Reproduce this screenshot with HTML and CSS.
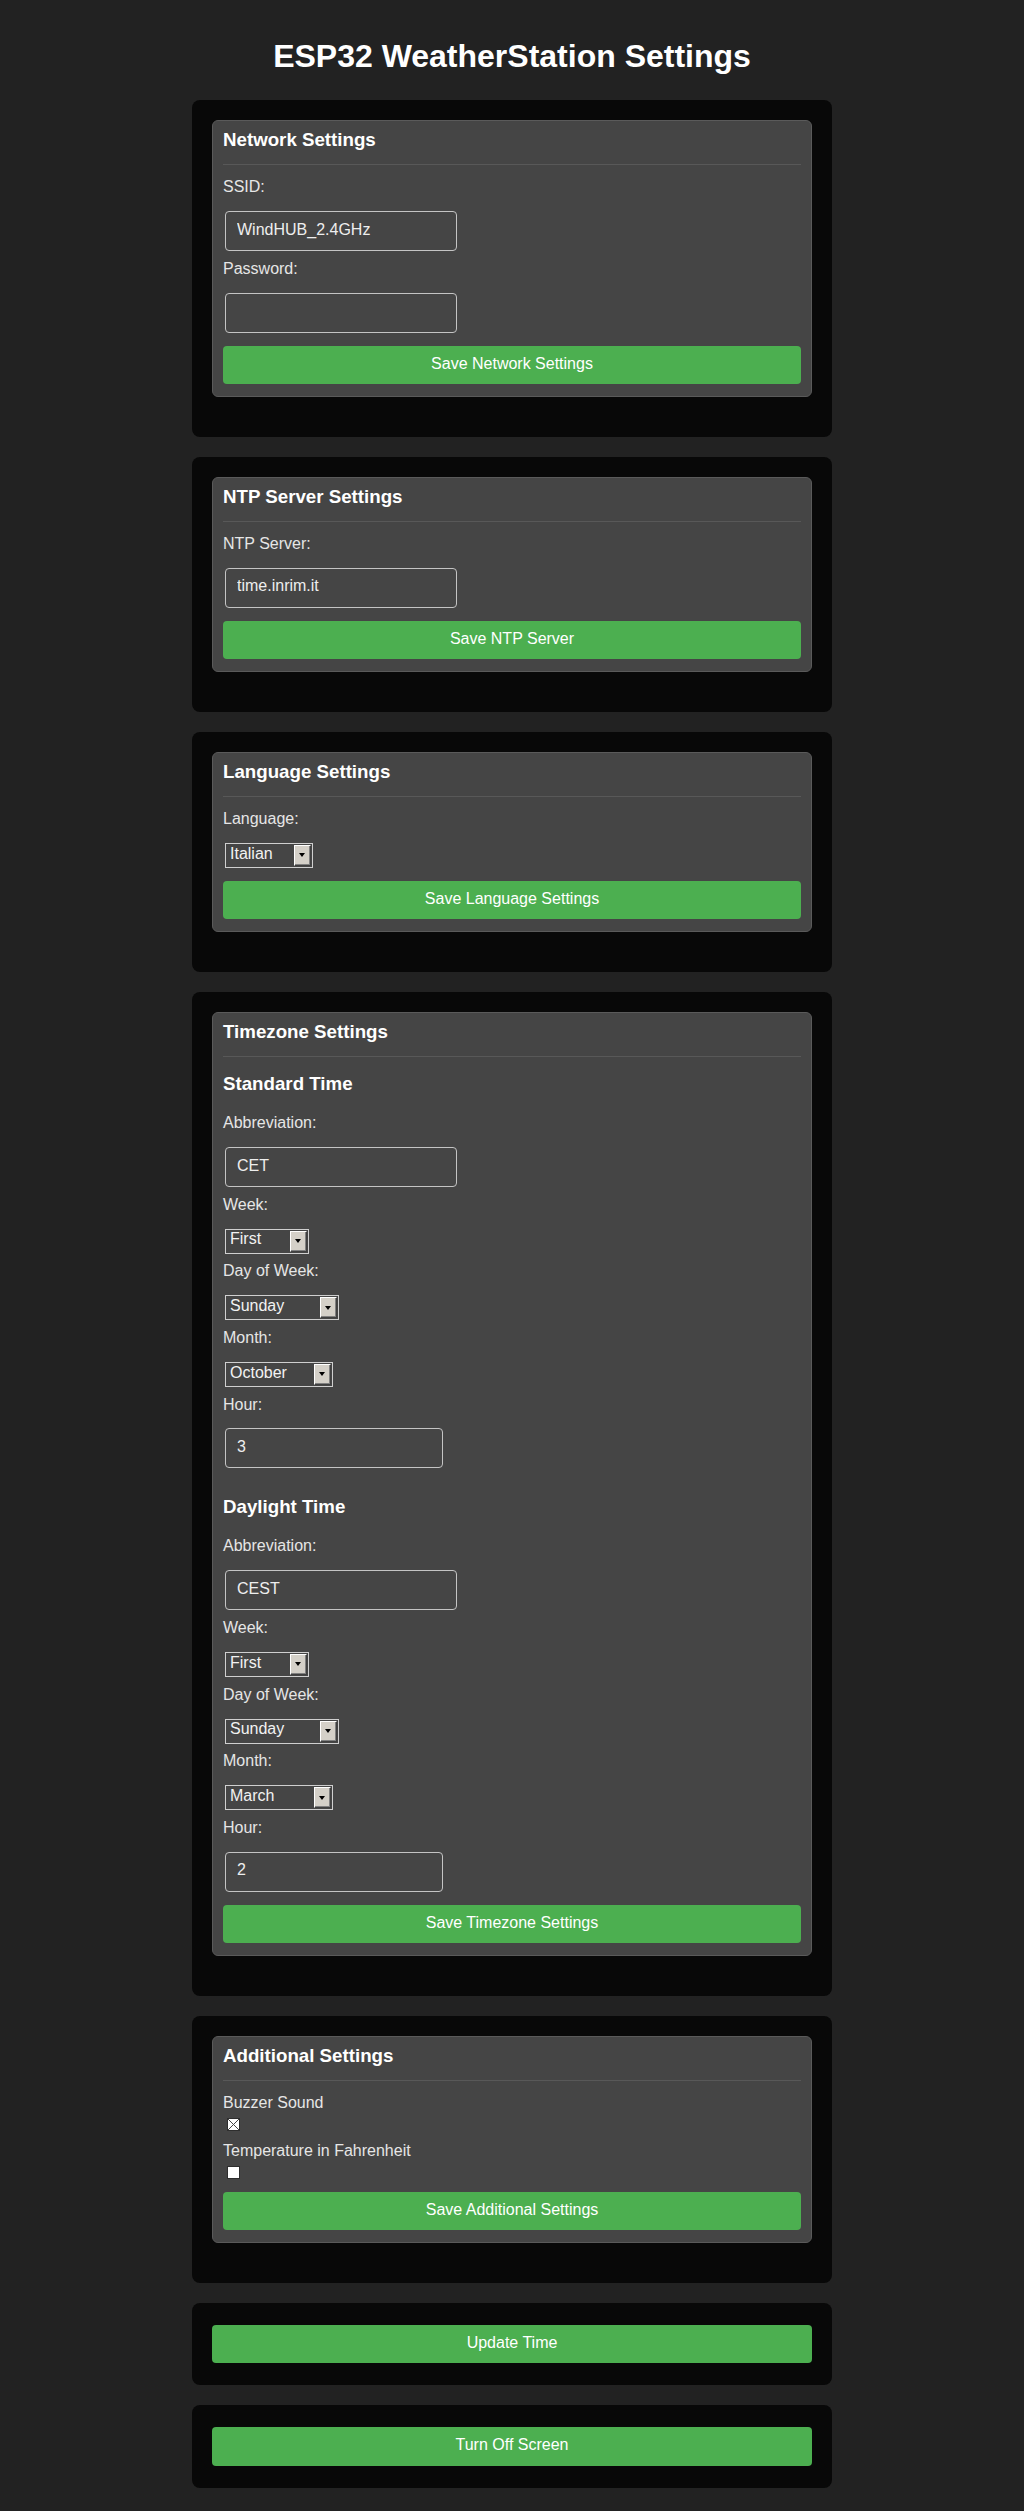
FILE: index.html
```html
<!DOCTYPE html>
<html lang="en">
<head>
<meta charset="utf-8">
<title>ESP32 WeatherStation Settings</title>
<link rel="stylesheet" href="styles.css">
</head>
<body>
<main class="page">
  <h1 class="page-title">ESP32 WeatherStation Settings</h1>

  <div class="panels">
    <section class="panel">
      <form class="card">
        <h3 class="card-title">Network Settings</h3>
        <label class="field-label" for="ssid">SSID:</label>
        <input class="text-input" type="text" id="ssid" value="WindHUB_2.4GHz">
        <label class="field-label" for="password">Password:</label>
        <input class="text-input" type="password" id="password">
        <button class="btn" type="button">Save Network Settings</button>
      </form>
    </section>

    <section class="panel">
      <form class="card">
        <h3 class="card-title">NTP Server Settings</h3>
        <label class="field-label" for="ntp">NTP Server:</label>
        <input class="text-input" type="text" id="ntp" value="time.inrim.it">
        <button class="btn" type="button">Save NTP Server</button>
      </form>
    </section>

    <section class="panel">
      <form class="card">
        <h3 class="card-title">Language Settings</h3>
        <label class="field-label" for="lang">Language:</label>
        <span class="select-wrap w-lang">
          <select class="select" id="lang">
            <option>English</option>
            <option selected>Italian</option>
            <option>Deutsch</option>
          </select>
          <span class="select-btn"></span>
        </span>
        <button class="btn" type="button">Save Language Settings</button>
      </form>
    </section>

    <section class="panel">
      <form class="card">
        <h3 class="card-title">Timezone Settings</h3>

        <div class="tz-block">
          <h3 class="sub-title">Standard Time</h3>
          <label class="field-label" for="std-abbr">Abbreviation:</label>
          <input class="text-input" type="text" id="std-abbr" value="CET">
          <label class="field-label" for="std-week">Week:</label>
          <span class="select-wrap w-week">
            <select class="select" id="std-week">
              <option selected>First</option><option>Second</option><option>Third</option><option>Fourth</option><option>Last</option>
            </select>
            <span class="select-btn"></span>
          </span>
          <label class="field-label" for="std-dow">Day of Week:</label>
          <span class="select-wrap w-day">
            <select class="select" id="std-dow">
              <option selected>Sunday</option><option>Monday</option><option>Tuesday</option><option>Wednesday</option><option>Thursday</option><option>Friday</option><option>Saturday</option>
            </select>
            <span class="select-btn"></span>
          </span>
          <label class="field-label" for="std-month">Month:</label>
          <span class="select-wrap w-month">
            <select class="select" id="std-month">
              <option>January</option><option>February</option><option>March</option><option>April</option><option>May</option><option>June</option><option>July</option><option>August</option><option>September</option><option selected>October</option><option>November</option><option>December</option>
            </select>
            <span class="select-btn"></span>
          </span>
          <label class="field-label" for="std-hour">Hour:</label>
          <input class="text-input num-input" type="text" id="std-hour" value="3">
        </div>

        <div class="tz-block">
          <h3 class="sub-title">Daylight Time</h3>
          <label class="field-label" for="dst-abbr">Abbreviation:</label>
          <input class="text-input" type="text" id="dst-abbr" value="CEST">
          <label class="field-label" for="dst-week">Week:</label>
          <span class="select-wrap w-week">
            <select class="select" id="dst-week">
              <option selected>First</option><option>Second</option><option>Third</option><option>Fourth</option><option>Last</option>
            </select>
            <span class="select-btn"></span>
          </span>
          <label class="field-label" for="dst-dow">Day of Week:</label>
          <span class="select-wrap w-day">
            <select class="select" id="dst-dow">
              <option selected>Sunday</option><option>Monday</option><option>Tuesday</option><option>Wednesday</option><option>Thursday</option><option>Friday</option><option>Saturday</option>
            </select>
            <span class="select-btn"></span>
          </span>
          <label class="field-label" for="dst-month">Month:</label>
          <span class="select-wrap w-month">
            <select class="select" id="dst-month">
              <option>January</option><option>February</option><option selected>March</option><option>April</option><option>May</option><option>June</option><option>July</option><option>August</option><option>September</option><option>October</option><option>November</option><option>December</option>
            </select>
            <span class="select-btn"></span>
          </span>
          <label class="field-label" for="dst-hour">Hour:</label>
          <input class="text-input num-input" type="text" id="dst-hour" value="2">
        </div>

        <button class="btn" type="button">Save Timezone Settings</button>
      </form>
    </section>

    <section class="panel">
      <form class="card">
        <h3 class="card-title">Additional Settings</h3>
        <div class="check-field">
          <label class="field-label check-label" for="buzzer">Buzzer Sound</label>
          <input class="check" type="checkbox" id="buzzer" checked>
        </div>
        <div class="check-field">
          <label class="field-label check-label" for="fahrenheit">Temperature in Fahrenheit</label>
          <input class="check" type="checkbox" id="fahrenheit">
        </div>
        <button class="btn" type="button">Save Additional Settings</button>
      </form>
    </section>

    <section class="panel panel-action">
      <button class="btn btn-action" type="button">Update Time</button>
    </section>

    <section class="panel panel-action">
      <button class="btn btn-action" type="button">Turn Off Screen</button>
    </section>
  </div>
</main>
</body>
</html>
```

FILE: styles.css
```css
* {
  box-sizing: border-box;
}

html, body {
  margin: 0;
  padding: 0;
  background: #222222;
}

body {
  font-family: "Liberation Sans", Arial, sans-serif;
  font-size: 16px;
  color: #e6e6e6;
}

.page {
  padding: 16px 20px 20px;
}

.page-title {
  margin: 21.5px 0 25.7px;
  font-size: 32px;
  line-height: 36.8px;
  font-weight: bold;
  color: #ffffff;
  text-align: center;
}

.panels {
  width: 640px;
  margin: 0 auto;
  display: flex;
  flex-direction: column;
  gap: 20px;
}

.panel {
  background: #080808;
  border-radius: 8px;
  padding: 20px;
}

.card {
  display: flex;
  flex-direction: column;
  align-items: flex-start;
  background: #454545;
  border: 1px solid #5a5a5a;
  border-radius: 6px;
  padding: 10px;
  margin: 0 0 20px;
}

.card-title {
  align-self: stretch;
  margin: 0 0 13.3px;
  padding-bottom: 15px;
  border-bottom: 1px solid #585858;
  font-size: 18.72px;
  line-height: 18px;
  font-weight: bold;
  color: #ffffff;
}

.tz-block {
  display: flex;
  flex-direction: column;
  align-items: flex-start;
  align-self: stretch;
}

.tz-block + .tz-block {
  margin-top: 16.3px;
}

.sub-title {
  margin: 2.5px 0 20px;
  font-size: 18.72px;
  line-height: 21.5px;
  font-weight: bold;
  color: #ffffff;
}

.field-label {
  display: block;
  line-height: 18.4px;
  margin: 0 0 14.5px;
  color: #e6e6e6;
}

.text-input {
  display: block;
  width: 232px;
  height: 40px;
  margin: 0 0 8.7px 2px;
  padding: 8.5px 11px 11.5px;
  background: transparent;
  border: 1px solid #c4c4c4;
  border-radius: 4px;
  color: #eeeeee;
  font-family: "Liberation Sans", Arial, sans-serif;
  font-size: 16px;
  line-height: 18.4px;
  outline: none;
}

.num-input {
  width: 218px;
}

.select-wrap {
  position: relative;
  display: block;
  height: 25px;
  margin: 0 0 8.7px 2px;
}

.w-lang { width: 88px; }
.w-week { width: 84px; }
.w-day { width: 114px; }
.w-month { width: 108px; }

.select {
  appearance: none;
  -webkit-appearance: none;
  display: block;
  width: 100%;
  height: 25px;
  margin: 0;
  padding: 0 22px 3px 4px;
  background: #454545;
  border: 1px solid #cfcfcf;
  border-radius: 0;
  color: #f2f2f2;
  font-family: "Liberation Sans", Arial, sans-serif;
  font-size: 16px;
  line-height: 18.4px;
  outline: none;
}

.select-btn {
  position: absolute;
  top: 2px;
  right: 2px;
  bottom: 2px;
  width: 17px;
  background: #d4d0c8;
  border-style: solid;
  border-width: 1px;
  border-color: #ffffff #404040 #404040 #ffffff;
  box-shadow: inset -1px -1px 0 #808080;
  pointer-events: none;
}

.select-btn::before {
  content: "";
  position: absolute;
  left: 50%;
  top: 50%;
  margin-left: -4px;
  margin-top: -2px;
  border-left: 3.5px solid transparent;
  border-right: 3.5px solid transparent;
  border-top: 4px solid #000000;
}

.btn {
  align-self: stretch;
  display: block;
  margin: 4.3px 0 1.5px;
  padding: 9px 10px 11px;
  background: #4caf50;
  border: none;
  border-radius: 4px;
  color: #ffffff;
  font-family: "Liberation Sans", Arial, sans-serif;
  font-size: 16px;
  line-height: 18.4px;
  cursor: pointer;
}

.check-field {
  display: flex;
  flex-direction: column;
  align-items: flex-start;
}

.check-field + .check-field {
  margin-top: 11.3px;
}

.check-field:last-of-type {
  margin-bottom: 9px;
}

.check-label {
  margin-bottom: 5.3px;
}

.check {
  appearance: none;
  -webkit-appearance: none;
  display: block;
  width: 13px;
  height: 13px;
  margin: 0 0 0 4.3px;
  background: #ffffff;
  border: 1px solid #2e2e2e;
  border-radius: 0;
}

.check:checked {
  background:
    linear-gradient(to top right, transparent calc(50% - 0.6px), #444 50%, transparent calc(50% + 0.6px)),
    linear-gradient(to bottom right, transparent calc(50% - 0.6px), #444 50%, transparent calc(50% + 0.6px)),
    #ffffff;
}

.panel-action {
  display: flex;
  flex-direction: column;
}

.btn-action {
  margin: 2px 0;
}
```
